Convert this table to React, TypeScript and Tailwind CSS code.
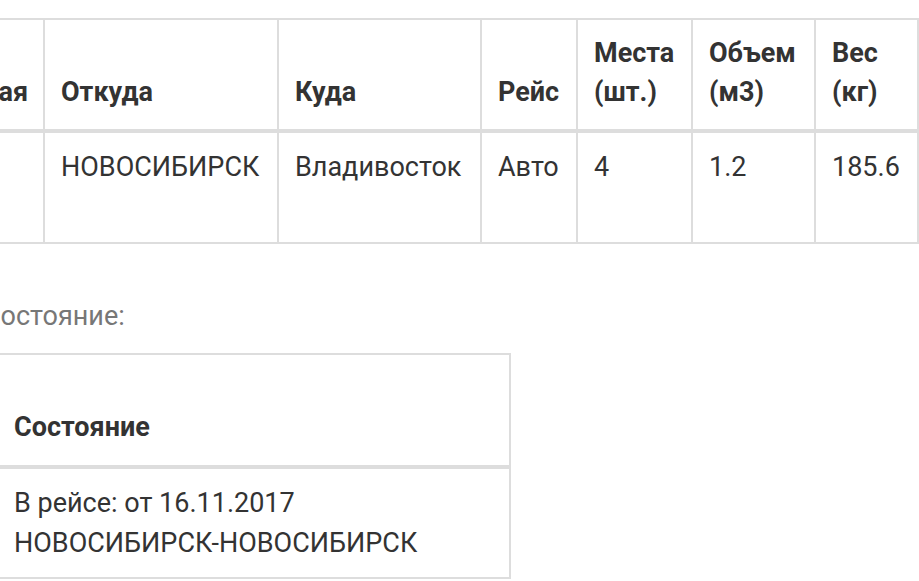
import React from "react";

const th = "flex flex-col justify-end pl-4 pr-2 pb-[17px] h-[113px] border-r-2 border-b-4 border-[#dddddd] font-bold text-[#333333] leading-[39px] whitespace-nowrap";
const td = "pl-4 pr-2 pt-[15px] h-[111px] border-r-2 border-b-2 border-[#dddddd] text-[#333333] leading-[39px] whitespace-nowrap";

export default function App() {
  return (
    <div className="w-[919px] h-[581px] overflow-hidden bg-white font-['Roboto',sans-serif] text-[27px]">
      <div className="mt-[18px] ml-[-128px] w-[1047px] border-t-2 border-[#dddddd] grid grid-cols-[173px_234px_203px_96px_115px_123px_103px]">
        <div className={th}>Накладная</div>
        <div className={th}>Откуда</div>
        <div className={th}>Куда</div>
        <div className={th}>Рейс</div>
        <div className={th}>
          <span>Места</span>
          <span>(шт.)</span>
        </div>
        <div className={th}>
          <span>Объем</span>
          <span>(м3)</span>
        </div>
        <div className={th}>
          <span>Вес</span>
          <span>(кг)</span>
        </div>
        <div className={td}>4512</div>
        <div className={td}>НОВОСИБИРСК</div>
        <div className={td}>Владивосток</div>
        <div className={td}>Авто</div>
        <div className={td}>4</div>
        <div className={td}>1.2</div>
        <div className={td}>185.6</div>
      </div>

      <div className="mt-[53px] ml-[-17px] leading-[39px] text-[#777777] whitespace-nowrap">Состояние:</div>

      <div className="mt-[17px] ml-[-202px] w-[713px] border-t-2 border-[#dddddd] grid grid-cols-[200px_513px]">
        <div className="flex flex-col justify-end pl-4 pb-[18px] h-[114px] border-r-2 border-b-4 border-[#dddddd] font-bold text-[#333333] leading-[40px]">
          Дата
        </div>
        <div className="flex flex-col justify-end pl-4 pb-[18px] h-[114px] border-r-2 border-b-4 border-[#dddddd] font-bold text-[#333333] leading-[40px]">
          Состояние
        </div>
        <div className="pl-4 pt-[14px] h-[110px] border-r-2 border-b-2 border-[#dddddd] text-[#333333] leading-[40px]">
          16.11
        </div>
        <div className="pl-4 pt-[14px] h-[110px] border-r-2 border-b-2 border-[#dddddd] text-[#333333] leading-[40px]">
          <div>В рейсе: от 16.11.2017</div>
          <div>НОВОСИБИРСК-НОВОСИБИРСК</div>
        </div>
      </div>
    </div>
  );
}
